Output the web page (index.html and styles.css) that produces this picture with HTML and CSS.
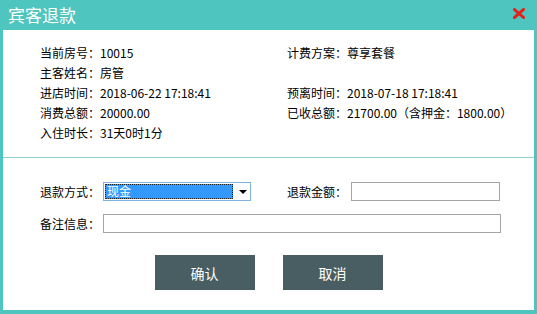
FILE: index.html
```html
<!DOCTYPE html>
<html lang="zh-CN">

<head>
    <meta charset="UTF-8">
    <meta name="viewport" content="width=device-width, initial-scale=1.0">
    <title>宾客退款</title>
    <link rel="stylesheet" href="styles.css">
</head>

<body>
    <div class="dialog">
        <div class="titlebar">
            <span class="title">宾客退款</span>
            <svg class="close" width="12" height="11" viewBox="0 0 12 11">
                <path d="M1.5 1.5 L10.5 9.5 M10.5 1.5 L1.5 9.5" stroke="#e3211b" stroke-width="3" stroke-linecap="square" fill="none"/>
            </svg>
        </div>
        <div class="info">
            <div class="info-row">
                <span>当前房号：10015</span>
                <span>计费方案：尊享套餐</span>
            </div>
            <div class="info-row">
                <span>主客姓名：房管</span>
                <span></span>
            </div>
            <div class="info-row">
                <span>进店时间：2018-06-22 17:18:41</span>
                <span>预离时间：2018-07-18 17:18:41</span>
            </div>
            <div class="info-row">
                <span>消费总额：20000.00</span>
                <span>已收总额：21700.00（含押金：1800.00）</span>
            </div>
            <div class="info-row">
                <span>入住时长：31天0时1分</span>
                <span></span>
            </div>
        </div>
        <form class="refund">
            <div class="form-row">
                <div class="field">
                    <label>退款方式：</label>
                    <div class="select">
                        <span class="selected">现金</span>
                        <span class="arrow"></span>
                    </div>
                </div>
                <div class="field">
                    <label>退款金额：</label>
                    <input type="text" class="amount">
                </div>
            </div>
            <div class="form-row">
                <div class="field wide">
                    <label>备注信息：</label>
                    <input type="text" class="note">
                </div>
            </div>
            <div class="buttons">
                <button type="button">确认</button>
                <button type="button">取消</button>
            </div>
        </form>
    </div>
</body>

</html>
```

FILE: styles.css
```css
body {
    margin: 0;
    font-family: "Noto Sans CJK SC", "Liberation Sans", sans-serif;
    font-size: 12px;
    color: #000;
}

.dialog {
    width: 531px;
    height: 310px;
    background: #fff;
    border: 3px solid #4ec5bf;
    border-top: none;
    border-bottom-width: 4px;
}

.titlebar {
    height: 30px;
    margin: 0 -3px;
    padding: 0 12px 0 8px;
    background: #4ec5bf;
    display: flex;
    align-items: center;
    justify-content: space-between;
}

.title {
    color: #fff;
    font-size: 17px;
    line-height: 30px;
}

.close {
    margin-top: -4px;
}

.info {
    padding: 13px 0 14px 37px;
    border-bottom: 1px solid #8fd0d1;
}

.info-row {
    display: grid;
    grid-template-columns: 247px 1fr;
    height: 20px;
    line-height: 20px;
}

.refund {
    padding: 24px 0 0 37px;
}

.form-row {
    display: flex;
    height: 19px;
    margin-bottom: 13px;
}

.field {
    display: flex;
    align-items: center;
    width: 247px;
}

.field.wide {
    width: auto;
}

label {
    width: 63px;
    flex: none;
}

.field:nth-child(2) label {
    width: 64px;
}

input {
    box-sizing: border-box;
    height: 19px;
    border: 1px solid #a5a5a5;
    padding: 0 3px;
    font: inherit;
    outline: none;
}

.amount {
    width: 149px;
}

.note {
    width: 398px;
}

.select {
    box-sizing: border-box;
    width: 148px;
    height: 19px;
    border: 1px solid #7fb3e6;
    display: flex;
    align-items: center;
    padding: 1px;
}

.selected {
    box-sizing: border-box;
    width: 128px;
    height: 15px;
    line-height: 13px;
    background: #3399ff;
    color: #fff;
    outline: 1px dotted #222;
    outline-offset: -1px;
    padding-left: 2px;
}

.arrow {
    margin-left: 6px;
    width: 0;
    height: 0;
    border-left: 4px solid transparent;
    border-right: 4px solid transparent;
    border-top: 4px solid #000;
}

.buttons {
    display: flex;
    justify-content: center;
    gap: 28px;
    margin: 22px 0 0 -37px;
}

button {
    width: 100px;
    height: 35px;
    background: #485e62;
    color: #fff;
    border: none;
    font: inherit;
    font-size: 14px;
    cursor: pointer;
}

button:hover {
    background: #3b4f52;
}
```
